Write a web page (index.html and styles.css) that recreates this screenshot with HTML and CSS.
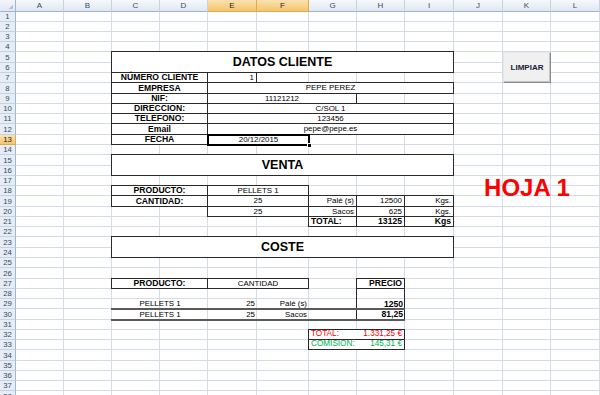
FILE: index.html
```html
<!DOCTYPE html>
<html lang="es">
<head>
<meta charset="utf-8">
<title>Hoja 1</title>
<link rel="stylesheet" href="styles.css">
</head>
<body>
<div class="sheet">
  <div class="corner"></div>
  <div class="ch">A</div><div class="ch">B</div><div class="ch">C</div><div class="ch">D</div>
  <div class="ch sel">E</div><div class="ch sel">F</div><div class="ch">G</div><div class="ch">H</div>
  <div class="ch">I</div><div class="ch">J</div><div class="ch">K</div><div class="ch">L</div>

  <div class="rowheads">
    <div class="rh">1</div><div class="rh">2</div><div class="rh">3</div><div class="rh">4</div><div class="rh">5</div>
    <div class="rh">6</div><div class="rh">7</div><div class="rh">8</div><div class="rh">9</div><div class="rh">10</div>
    <div class="rh">11</div><div class="rh">12</div><div class="rh sel">13</div><div class="rh">14</div><div class="rh">15</div>
    <div class="rh">16</div><div class="rh">17</div><div class="rh">18</div><div class="rh">19</div><div class="rh">20</div>
    <div class="rh">21</div><div class="rh">22</div><div class="rh">23</div><div class="rh">24</div><div class="rh">25</div>
    <div class="rh">26</div><div class="rh">27</div><div class="rh">28</div><div class="rh">29</div><div class="rh">30</div>
    <div class="rh">31</div><div class="rh">32</div><div class="rh">33</div><div class="rh">34</div><div class="rh">35</div>
    <div class="rh">36</div><div class="rh">37</div><div class="rh">38</div>
  </div>

  <div class="vlines"><i></i><i></i><i></i><i></i><i></i><i></i><i></i><i></i><i></i><i></i><i></i><i></i></div>
  <div class="hlines">
    <i></i><i></i><i></i><i></i><i></i><i></i><i></i><i></i><i></i><i></i>
    <i></i><i></i><i></i><i></i><i></i><i></i><i></i><i></i><i></i><i></i>
    <i></i><i></i><i></i><i></i><i></i><i></i><i></i><i></i><i></i><i></i>
    <i></i><i></i><i></i><i></i><i></i><i></i><i></i><i></i>
  </div>

  <!-- DATOS CLIENTE -->
  <div class="c bx title ctr r5x2 cCI">DATOS CLIENTE</div>
  <div class="c bx b ctr r7 cCD">NÚMERO CLIENTE</div>
  <div class="c bx rt r7 cE">1</div>
  <div class="c bx b ctr r8 cCD">EMPRESA</div>
  <div class="c bx ctr r8 cEI">PEPE PEREZ</div>
  <div class="c bx b ctr r9 cCD">NIF:</div>
  <div class="c bx ctr r9 cEG">11121212</div>
  <div class="c bx b ctr r10 cCD">DIRECCION:</div>
  <div class="c bx ctr r10 cEI">C/SOL 1</div>
  <div class="c bx b ctr r11 cCD">TELEFONO:</div>
  <div class="c bx ctr r11 cEI">123456</div>
  <div class="c bx b ctr r12 cCD">Email</div>
  <div class="c bx ctr r12 cEI">pepe@pepe.es</div>
  <div class="c bx b ctr r13 cCD">FECHA</div>
  <div class="c selbox ctr r13 cEF">20/12/2015<span class="handle"></span></div>

  <!-- VENTA -->
  <div class="c bx title ctr r15x2 cCI">VENTA</div>
  <div class="c bx b ctr r18 cCD">PRODUCTO:</div>
  <div class="c bx ctr r18 cEF">PELLETS 1</div>
  <div class="c bx b ctr r19 cCD">CANTIDAD:</div>
  <div class="c bx ctr r19 cEF">25</div>
  <div class="c bx rt r19 cG">Palé (s)</div>
  <div class="c bx rt r19 cH">12500</div>
  <div class="c bx rt r19 cI">Kgs.</div>
  <div class="c bx ctr r20 cEF">25</div>
  <div class="c bx rt r20 cG">Sacos</div>
  <div class="c bx rt r20 cH">625</div>
  <div class="c bx rt r20 cI">Kgs.</div>
  <div class="c bx b r21 cG">TOTAL:</div>
  <div class="c bx b rt r21 cH">13125</div>
  <div class="c bx b rt r21 cI">Kgs</div>

  <div class="c hoja r17x2 cJL">HOJA 1</div>

  <!-- COSTE -->
  <div class="c bx title ctr r23x2 cCI">COSTE</div>
  <div class="c bx b ctr r27 cCD">PRODUCTO:</div>
  <div class="c bx ctr r27 cEF">CANTIDAD</div>
  <div class="hcol r27x4 cH"></div>
  <div class="c bx b rt r27 cH">PRECIO</div>
  <div class="rule r29 cCH"></div>
  <div class="rule r30 cCH"></div>
  <div class="c ctr r29 cCD">PELLETS 1</div>
  <div class="c rt r29 cE">25</div>
  <div class="c rt r29 cF">Palé (s)</div>
  <div class="c b rt r29 cH">1250</div>
  <div class="c ctr r30 cCD">PELLETS 1</div>
  <div class="c rt r30 cE">25</div>
  <div class="c rt r30 cF">Sacos</div>
  <div class="c b rt r30 cH">81,25</div>

  <div class="c bx sum red r32 cGH"><span>TOTAL:</span><span>1.331,25 €</span></div>
  <div class="c bx sum green r33 cGH"><span>COMISION:</span><span>145,31 €</span></div>

  <button class="btn r5x3 cK" type="button">LIMPIAR</button>
</div>
</body>
</html>
```

FILE: styles.css
```css
:root {
  --cols: 48px 48px 48px 48px 49px 52px 48px 48px 49px 49px 48px 49px;
  --rows: 10px 10px 10px 10px 11px 10px 10px 11px 10px 10px 10px 11px 10px 10px 11px 10px 10px 10px 11px 10px 10px 10px 11px 10px 10px 11px 10px 10px 10px 11px 10px 10px 10px 11px 10px 10px 10px 11px;
  --grid: #d5dce8;
  --hdrline: #9eb6ce;
}

* { box-sizing: border-box; }

html, body {
  margin: 0;
  height: 100%;
  overflow: hidden;
  background: #fff;
}

body {
  font-family: "Liberation Sans", Arial, sans-serif;
  color: #000;
}

.sheet {
  display: grid;
  grid-template-columns: 16px var(--cols);
  grid-template-rows: 12px var(--rows);
  width: 600px;
}

/* headers */
.corner {
  background:
    linear-gradient(135deg, transparent 62%, #b7c4d6 62%) right 2px bottom 2px / 6px 6px no-repeat,
    linear-gradient(#f3f6fb, #e1e8f2);
  border-right: 1px solid var(--hdrline);
  border-bottom: 1px solid var(--hdrline);
}

.ch {
  display: flex;
  align-items: center;
  justify-content: center;
  font-size: 8px;
  color: #3a4b60;
  background: linear-gradient(#f6f8fc, #e0e7f1);
  border-right: 1px solid #c5d2e2;
  border-bottom: 1px solid var(--hdrline);
}

.ch.sel, .rh.sel {
  background: linear-gradient(#fbe2b0, #f3c56e);
  color: #1d1d1d;
  border-color: #e0a94a;
}

.rowheads {
  grid-area: 2 / 1 / -1 / 2;
  display: grid;
  grid-template-rows: var(--rows);
}

.rh {
  display: flex;
  align-items: center;
  justify-content: center;
  font-size: 7.8px;
  color: #3a4b60;
  background: #e6edf6;
  border-right: 1px solid var(--hdrline);
  border-bottom: 1px solid #c5d2e2;
}

/* gridlines */
.vlines {
  grid-area: 2 / 2 / -1 / -1;
  display: grid;
  grid-template-columns: var(--cols);
}
.vlines i { border-right: 1px solid var(--grid); }

.hlines {
  grid-area: 2 / 2 / -1 / -1;
  display: grid;
  grid-template-rows: var(--rows);
}
.hlines i { border-bottom: 1px solid var(--grid); }

/* cells */
.c {
  display: flex;
  align-items: center;
  font-size: 7.9px;
  line-height: 1;
  padding: 0 2px;
  white-space: nowrap;
}
.bx {
  border: 1px solid #2a2a2a;
  margin: -1px 0 0 -1px;
  background: #fff;
}
.ctr { justify-content: center; }
.rt { justify-content: flex-end; }
.b { font-weight: bold; font-size: 8.6px; }
.title { font-size: 12.5px; font-weight: bold; }

.selbox {
  position: relative;
  border: 2px solid #000;
  margin: -1px -1px -1px -1px;
  background: #fff;
}
.handle {
  position: absolute;
  right: -4px;
  bottom: -4px;
  width: 5px;
  height: 5px;
  background: #000;
  border: 1px solid #fff;
}

.hcol {
  border-left: 1px solid #2a2a2a;
  border-right: 1px solid #2a2a2a;
  border-bottom: 1px solid #2a2a2a;
  margin-left: -1px;
}
.rule {
  border-bottom: 2px solid #5a5a5a;
  margin: 0 0 -1px -1px;
}

.sum { justify-content: space-between; font-size: 8.2px; }
.red { color: #ff0000; }
.green { color: #00b050; }

.hoja {
  color: #ff0000;
  font-size: 24px;
  font-weight: bold;
  line-height: 24px;
  justify-content: center;
  align-items: flex-start;
  padding: 0;
}

.btn {
  margin: 0;
  padding: 0;
  font-family: "Liberation Sans", Arial, sans-serif;
  font-size: 8px;
  font-weight: bold;
  color: #1c1c38;
  background: #f0f0f0;
  border: 1px solid;
  border-color: #e6e6e6 #8c8c8c #8c8c8c #e6e6e6;
  box-shadow: inset -1px -1px 0 #c4c4c4;
}

/* placement: rows (grid line = sheet row + 1) */
.r5x2 { grid-row: 6 / 8; }
.r5x3 { grid-row: 6 / 9; }
.r7 { grid-row: 8; }
.r8 { grid-row: 9; }
.r9 { grid-row: 10; }
.r10 { grid-row: 11; }
.r11 { grid-row: 12; }
.r12 { grid-row: 13; }
.r13 { grid-row: 14; }
.r15x2 { grid-row: 16 / 18; }
.r17x2 { grid-row: 18 / 20; }
.r18 { grid-row: 19; }
.r19 { grid-row: 20; }
.r20 { grid-row: 21; }
.r21 { grid-row: 22; }
.r23x2 { grid-row: 24 / 26; }
.r27 { grid-row: 28; }
.r27x4 { grid-row: 28 / 32; }
.r29 { grid-row: 30; }
.r30 { grid-row: 31; }
.r32 { grid-row: 33; }
.r33 { grid-row: 34; }

/* placement: columns (A = line 2) */
.cCI { grid-column: 4 / 11; }
.cCD { grid-column: 4 / 6; }
.cCH { grid-column: 4 / 10; }
.cE { grid-column: 6 / 7; }
.cEF { grid-column: 6 / 8; }
.cEG { grid-column: 6 / 9; }
.cEI { grid-column: 6 / 11; }
.cF { grid-column: 7 / 8; }
.cG { grid-column: 8 / 9; }
.cGH { grid-column: 8 / 10; }
.cH { grid-column: 9 / 10; }
.cI { grid-column: 10 / 11; }
.cK { grid-column: 12 / 13; }
.cJL { grid-column: 11 / 14; }
```
